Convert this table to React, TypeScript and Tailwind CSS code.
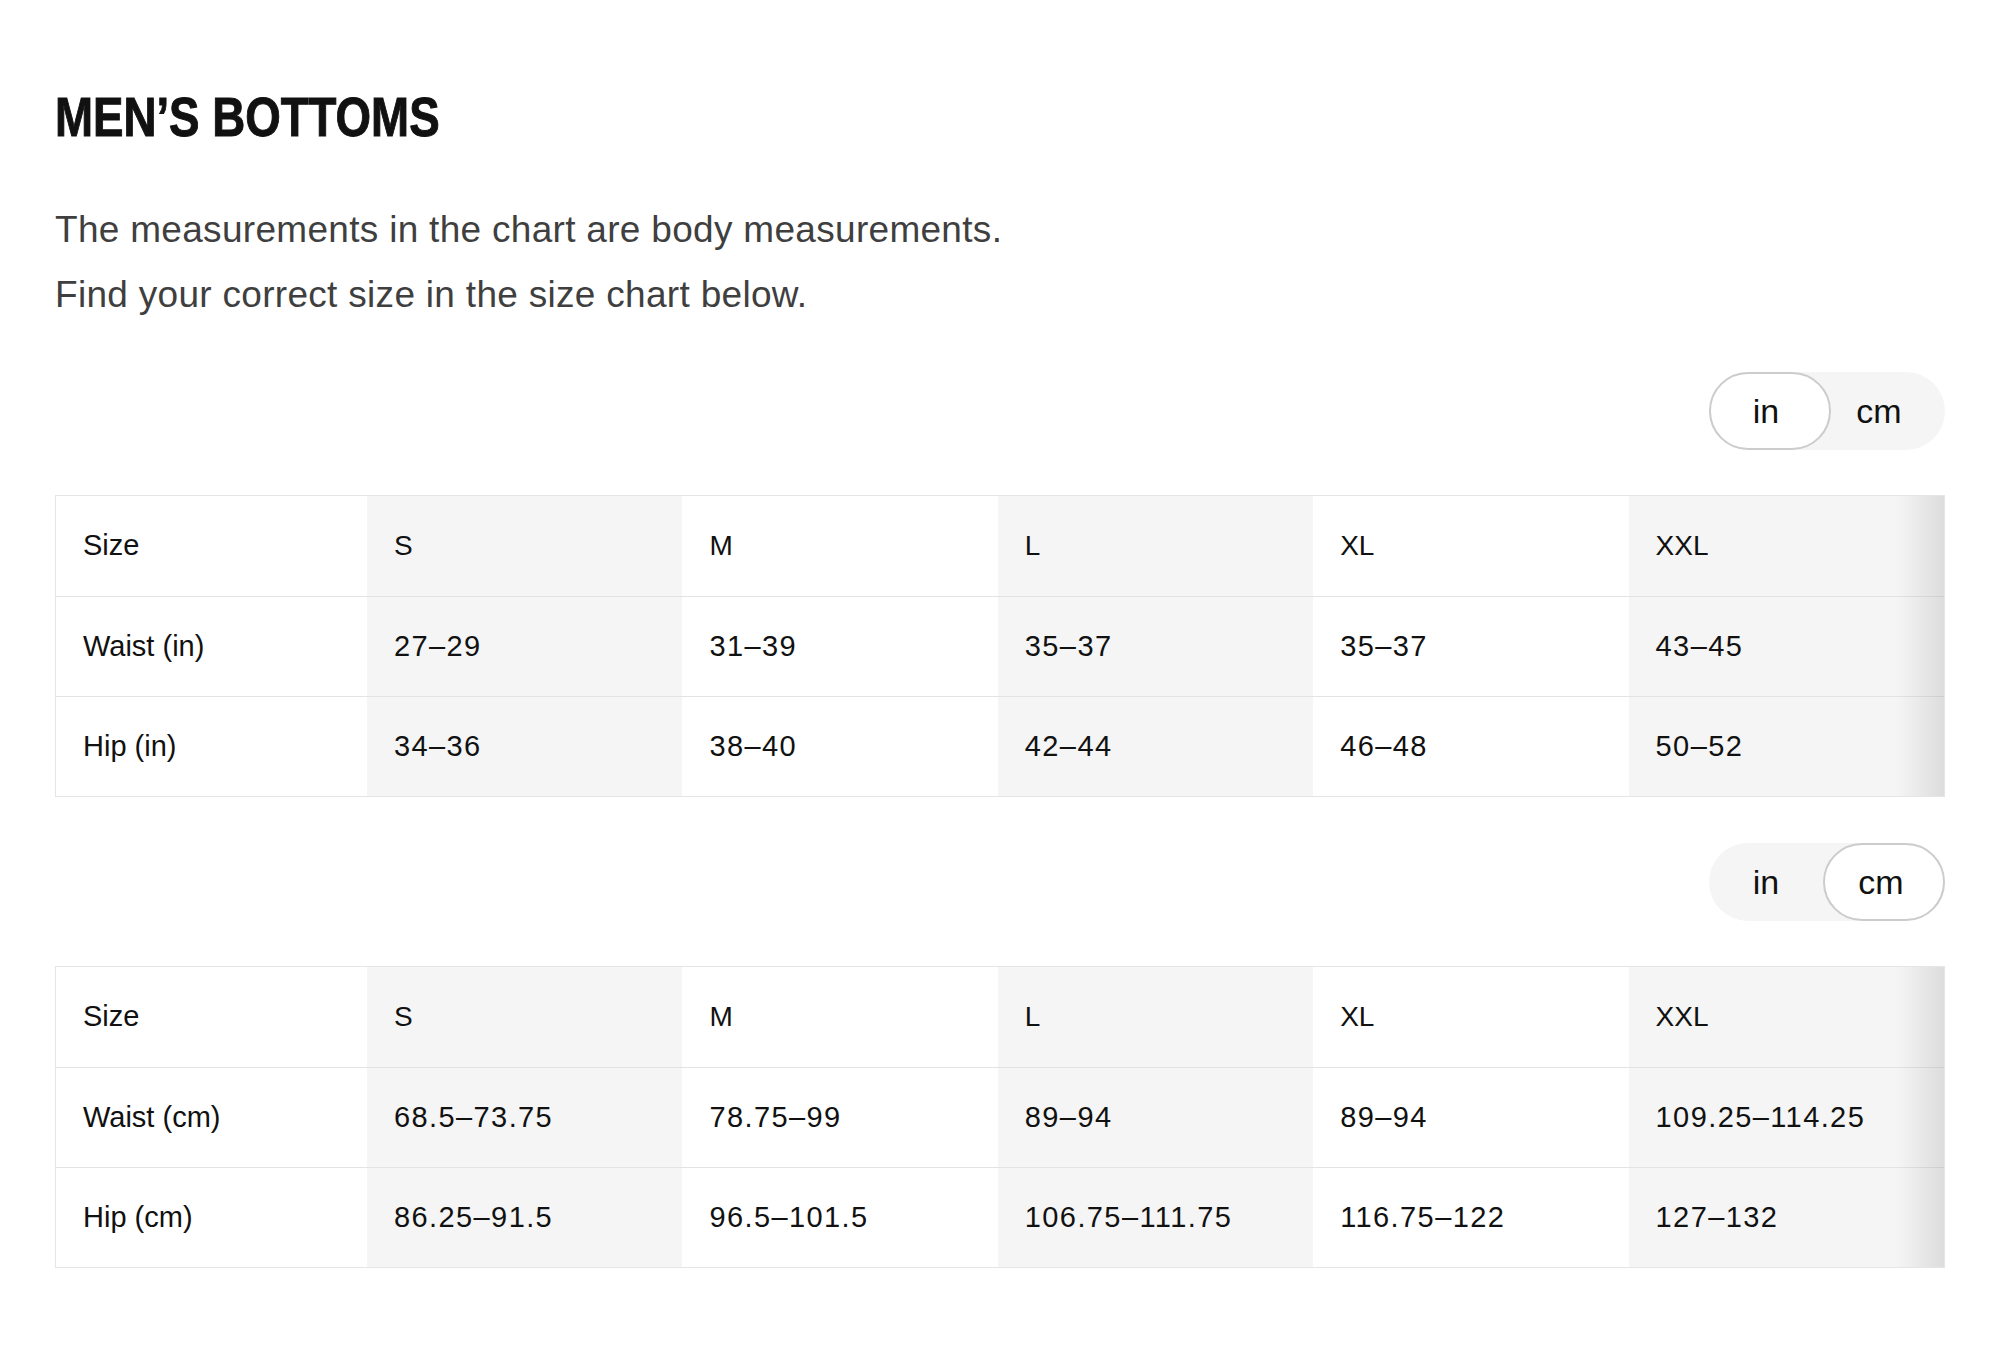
import React from "react";

type Unit = "in" | "cm";

const inRows = [
  ["Waist (in)", "27–29", "31–39", "35–37", "35–37", "43–45"],
  ["Hip (in)", "34–36", "38–40", "42–44", "46–48", "50–52"],
];
const cmRows = [
  ["Waist (cm)", "68.5–73.75", "78.75–99", "89–94", "89–94", "109.25–114.25"],
  ["Hip (cm)", "86.25–91.5", "96.5–101.5", "106.75–111.75", "116.75–122", "127–132"],
];
const sizes = ["Size", "S", "M", "L", "XL", "XXL"];

function Toggle({ active }: { active: Unit }) {
  const base =
    "h-full flex items-center justify-center rounded-full text-[34px] text-[#111111]";
  const on = " w-[122px] bg-white border-2 border-[#cccccc]";
  const off = " w-[114px]";
  return (
    <div className="flex justify-end">
      <div className="flex h-[78px] rounded-full bg-[#f5f5f5]">
        <div className={base + (active === "in" ? on + " pr-[8px]" : off)}>in</div>
        <div className={base + (active === "cm" ? on + " pr-[6px]" : off + " pr-[18px]")}>cm</div>
      </div>
    </div>
  );
}

function Table({ rows }: { rows: string[][] }) {
  const all = [sizes, ...rows];
  return (
    <div className="relative border border-[#e5e5e5]">
      {all.map((row, ri) => (
        <div
          key={ri}
          className={
            "grid grid-cols-[311px_repeat(5,1fr)] h-[100px] " +
            (ri > 0 ? "border-t border-[#e3e3e3]" : "")
          }
        >
          {row.map((cell, ci) => {
            const gray = ci % 2 === 1;
            const isNum = ri > 0 && ci > 0;
            return (
              <div
                key={ci}
                className={
                  "flex items-center text-[#111111] pl-[27px] " +
                  (ci === 0 ? "text-[29px] " : "") +
                  (gray ? "bg-[#f5f5f5] " : "bg-white ") +
                  (ci > 0 && ri === 0 ? "text-[28px] " : "") +
                  (isNum ? "text-[29px] tracking-[1.4px]" : "")
                }
              >
                {cell}
              </div>
            );
          })}
        </div>
      ))}
      <div className="absolute top-0 bottom-0 right-0 w-[48px] bg-gradient-to-r from-transparent to-black/10 pointer-events-none" />
    </div>
  );
}

export default function App() {
  return (
    <div
      className="min-h-screen bg-white px-[55px] pt-[89px] pb-[80px]"
      style={{ fontFamily: '"Liberation Sans", Arial, sans-serif' }}
    >
      <h1 className="text-[56px] leading-[56px] font-bold text-[#111111] origin-left scale-x-[0.815] [-webkit-text-stroke:1px_#111111]">
        MEN’S BOTTOMS
      </h1>
      <p className="mt-[52px] text-[37px] leading-[65px] tracking-[0.3px] text-[#3f3f3f]">
        The measurements in the chart are body measurements.
        <br />
        Find your correct size in the size chart below.
      </p>
      <div className="mt-[45px]">
        <Toggle active="in" />
      </div>
      <div className="mt-[45px]">
        <Table rows={inRows} />
      </div>
      <div className="mt-[46px]">
        <Toggle active="cm" />
      </div>
      <div className="mt-[45px]">
        <Table rows={cmRows} />
      </div>
    </div>
  );
}
